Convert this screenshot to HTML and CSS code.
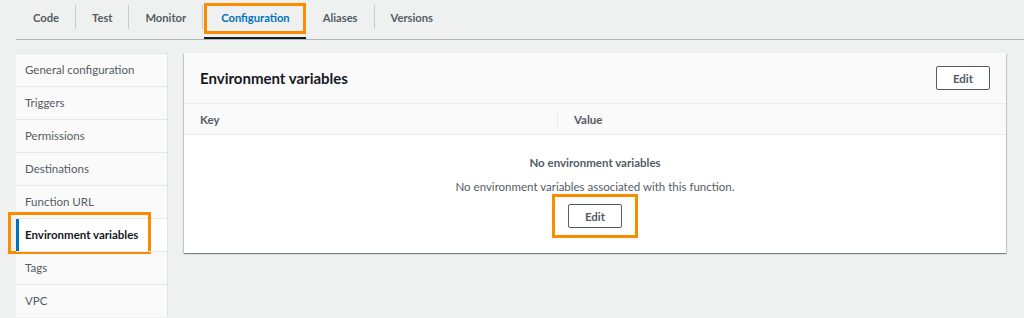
FILE: index.html
```html
<!DOCTYPE html>
<html lang="en">
<head>
    <meta charset="UTF-8">
    <meta name="viewport" content="width=device-width, initial-scale=1.0">
    <title>Lambda configuration</title>
    <link rel="stylesheet" href="styles.css">
</head>
<body>
    <div class="tabs">
        <div class="tab">Code</div>
        <div class="tab">Test</div>
        <div class="tab">Monitor</div>
        <div class="tab active highlight">Configuration</div>
        <div class="tab">Aliases</div>
        <div class="tab">Versions</div>
    </div>

    <div class="layout">
        <ul class="side-nav">
            <li>General configuration</li>
            <li>Triggers</li>
            <li>Permissions</li>
            <li>Destinations</li>
            <li>Function URL</li>
            <li class="selected highlight">Environment variables</li>
            <li>Tags</li>
            <li>VPC</li>
        </ul>

        <div class="panel">
            <div class="panel-header">
                <h2>Environment variables</h2>
                <button class="button">Edit</button>
            </div>
            <div class="table-head">
                <div class="col key">Key</div>
                <div class="col value">Value</div>
            </div>
            <div class="empty">
                <p class="empty-title">No environment variables</p>
                <p class="empty-text">No environment variables associated with this function.</p>
                <div class="highlight-box">
                    <button class="button">Edit</button>
                </div>
            </div>
        </div>
    </div>
</body>
</html>
```

FILE: styles.css
```css
body {
    margin: 0;
    background-color: #eff1f0;
    color: #16191f;
    font-family: 'Lato', 'Open Sans', sans-serif;
    font-size: 11.5px;
    height: 318px;
    overflow: hidden;
}

/* tabs */
.tabs {
    display: flex;
    margin-left: 16px;
    height: 39px;
    border-bottom: 1px solid #aab7b8;
}

.tab {
    position: relative;
    padding: 0 16px 0 17px;
    line-height: 35px;
    font-weight: 700;
    font-size: 11.2px;
    color: #545b64;
    border-bottom: 2px solid transparent;
}

.tab + .tab::before {
    content: "";
    position: absolute;
    left: 0;
    top: 5px;
    height: 24px;
    width: 1px;
    background-color: #c6cdce;
}

.tab.active {
    color: #0073bb;
    border-bottom: 2px solid #16191f;
    height: 37px;
    margin-left: 2px;
}

.tab.active + .tab::before {
    display: none;
}

.tab.active::before {
    left: -2px;
}

.tab.highlight::after {
    content: "";
    position: absolute;
    left: 0;
    right: 0;
    top: 3px;
    height: 31px;
    border: 3px solid #fb8c00;
    box-sizing: border-box;
}

/* layout */
.layout {
    display: flex;
    gap: 16px;
    padding: 13px 18px 0 16px;
}

.side-nav {
    list-style: none;
    margin: 0;
    padding: 0;
    width: 152px;
    flex-shrink: 0;
    background-color: #fafafa;
    border-right: 1px solid #e1e4e4;
    box-sizing: border-box;
}

.side-nav li {
    position: relative;
    height: 33px;
    line-height: 32px;
    padding-left: 9px;
    border-top: 1px solid #e5e8e8;
    box-sizing: border-box;
    color: #545b64;
}

.side-nav li.selected {
    background-color: #ffffff;
    color: #16191f;
    font-weight: 700;
}

.side-nav li.selected::before {
    content: "";
    position: absolute;
    left: 0;
    top: 0;
    bottom: 0;
    width: 3px;
    background-color: #0073bb;
}

.side-nav li.highlight::after {
    content: "";
    position: absolute;
    left: -8px;
    right: 16px;
    top: -7px;
    bottom: -3px;
    border: 3px solid #fb8c00;
}

/* panel */
.panel {
    flex: 1;
    align-self: flex-start;
    background-color: #ffffff;
    box-shadow: 0 1px 1px 0 rgba(0, 28, 36, 0.3), 1px 1px 1px 0 rgba(0, 28, 36, 0.15), -1px 1px 1px 0 rgba(0, 28, 36, 0.15);
}

.panel-header {
    display: flex;
    align-items: center;
    justify-content: space-between;
    height: 50px;
    padding: 0 16px;
    background-color: #fafafa;
    border-bottom: 1px solid #eaeded;
}

.panel-header h2 {
    margin: 0;
    font-size: 15px;
    font-weight: 700;
}

.button {
    background-color: #ffffff;
    border: 1px solid #545b64;
    border-radius: 2px;
    color: #545b64;
    font-family: inherit;
    font-size: 11.5px;
    font-weight: 700;
    width: 54px;
    height: 24px;
    padding: 0;
}

.table-head {
    display: flex;
    height: 30px;
    align-items: center;
    background-color: #fafafa;
    border-bottom: 1px solid #eaeded;
    font-weight: 700;
    color: #545b64;
}

.col {
    box-sizing: border-box;
    padding-left: 16px;
}

.col.key {
    width: 373px;
}

.col.value {
    border-left: 1px solid #eaeded;
    line-height: 19px;
}

.empty {
    display: flex;
    flex-direction: column;
    align-items: center;
    padding: 20px 0 15px;
}

.empty p {
    margin: 0;
    color: #545b64;
    line-height: 16px;
}

.empty .empty-title {
    font-weight: 700;
}

.empty .empty-text {
    margin-top: 8px;
    line-height: 15px;
}

.highlight-box {
    padding: 7px 13px;
    border: 3px solid #fb8c00;
}
```
